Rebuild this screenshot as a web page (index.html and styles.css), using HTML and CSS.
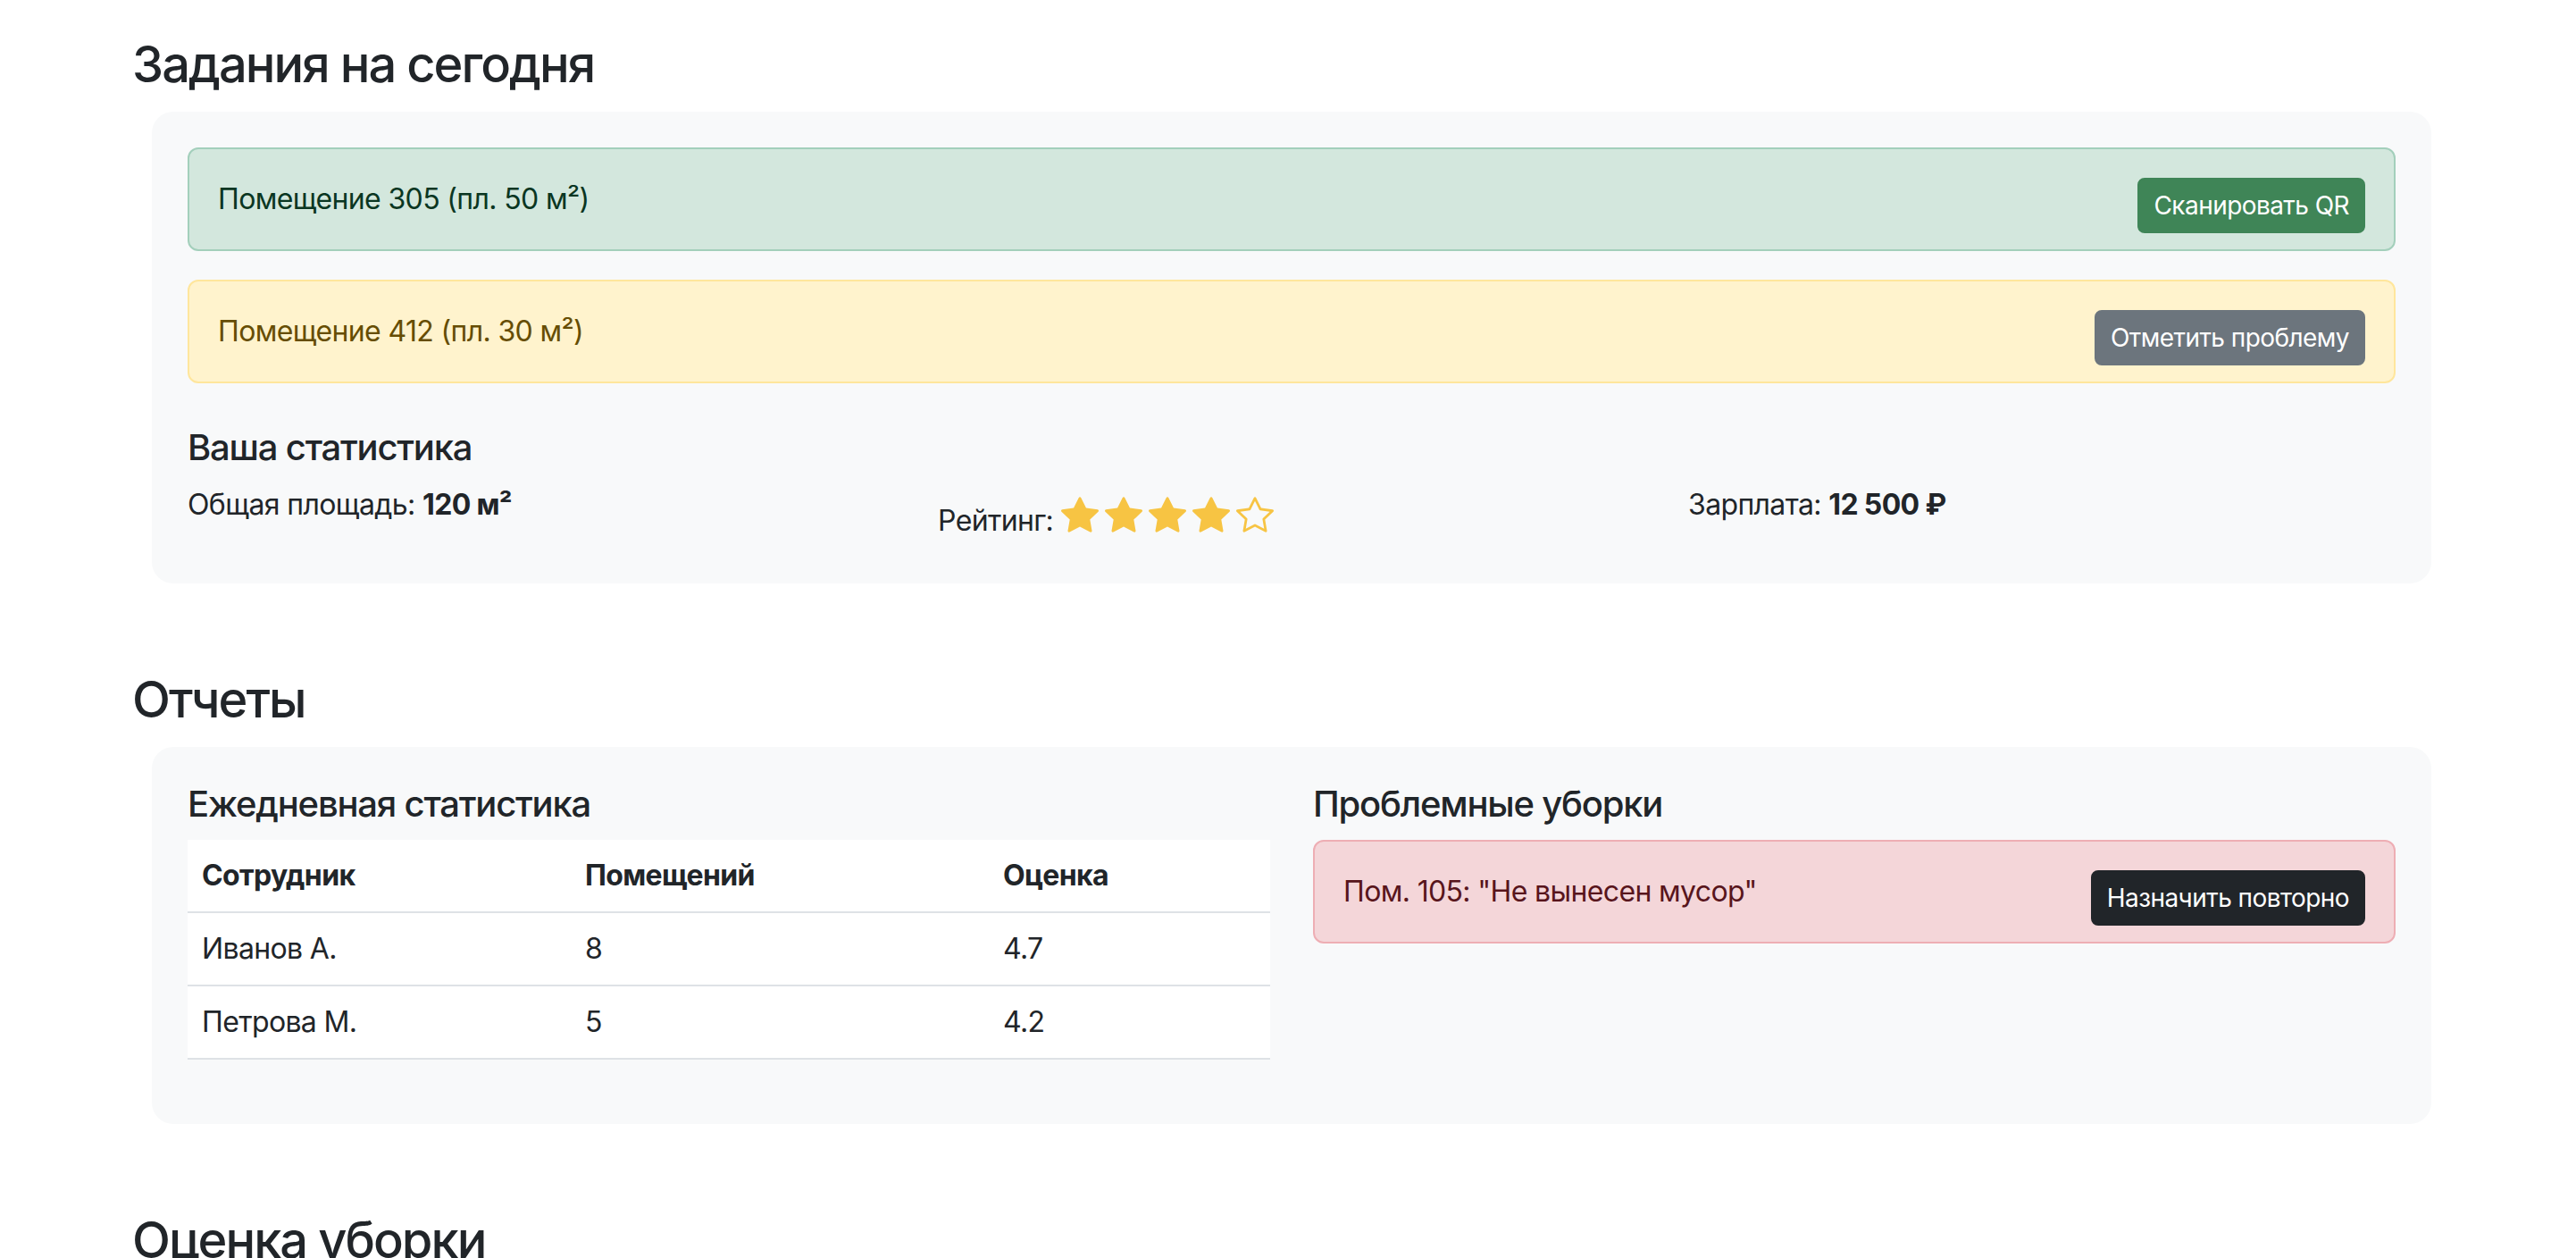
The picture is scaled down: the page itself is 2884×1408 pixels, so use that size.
FILE: index.html
```html
<!DOCTYPE html>
<html lang="ru">
<head>
<meta charset="utf-8">
<title>Уборка</title>
<link rel="stylesheet" href="styles.css">
</head>
<body>
<div class="container">
  <section class="section">
    <h3 class="title">Задания на сегодня</h3>
    <div class="panel">
      <div class="alert alert-success">
        <button class="btn btn-success">Сканировать QR</button>
        Помещение 305 (пл. 50 м²)
      </div>
      <div class="alert alert-warning">
        <button class="btn btn-secondary">Отметить проблему</button>
        Помещение 412 (пл. 30 м²)
      </div>
      <h5 class="subtitle stats-title">Ваша статистика</h5>
      <div class="row3">
        <p class="stat">Общая площадь: <strong>120 м²</strong></p>
        <p class="stat">Рейтинг: <span class="stars"><svg class="star" viewBox="0 0 16 16"><path d="M3.612 15.443c-.386.198-.824-.149-.746-.592l.83-4.73L.173 6.765c-.329-.314-.158-.888.283-.95l4.898-.696L7.538.792c.197-.39.73-.39.927 0l2.184 4.327 4.898.696c.441.062.612.636.282.95l-3.522 3.356.83 4.73c.078.443-.36.79-.746.592L8 13.187l-4.389 2.256z"/></svg><svg class="star" viewBox="0 0 16 16"><path d="M3.612 15.443c-.386.198-.824-.149-.746-.592l.83-4.73L.173 6.765c-.329-.314-.158-.888.283-.95l4.898-.696L7.538.792c.197-.39.73-.39.927 0l2.184 4.327 4.898.696c.441.062.612.636.282.95l-3.522 3.356.83 4.73c.078.443-.36.79-.746.592L8 13.187l-4.389 2.256z"/></svg><svg class="star" viewBox="0 0 16 16"><path d="M3.612 15.443c-.386.198-.824-.149-.746-.592l.83-4.73L.173 6.765c-.329-.314-.158-.888.283-.95l4.898-.696L7.538.792c.197-.39.73-.39.927 0l2.184 4.327 4.898.696c.441.062.612.636.282.95l-3.522 3.356.83 4.73c.078.443-.36.79-.746.592L8 13.187l-4.389 2.256z"/></svg><svg class="star" viewBox="0 0 16 16"><path d="M3.612 15.443c-.386.198-.824-.149-.746-.592l.83-4.73L.173 6.765c-.329-.314-.158-.888.283-.95l4.898-.696L7.538.792c.197-.39.73-.39.927 0l2.184 4.327 4.898.696c.441.062.612.636.282.95l-3.522 3.356.83 4.73c.078.443-.36.79-.746.592L8 13.187l-4.389 2.256z"/></svg><svg class="star" viewBox="0 0 16 16"><path d="M2.866 14.85c-.078.444.36.791.746.593l4.39-2.256 4.389 2.256c.386.198.824-.149.746-.592l-.83-4.73 3.522-3.356c.33-.314.16-.888-.282-.95l-4.898-.696L8.465.792a.513.513 0 0 0-.927 0L5.354 5.12l-4.898.696c-.441.062-.612.636-.283.95l3.523 3.356-.83 4.73zm4.905-2.767-3.686 1.894.694-3.957a.565.565 0 0 0-.163-.505L1.71 6.745l4.052-.576a.525.525 0 0 0 .393-.288L8 2.223l1.847 3.658a.525.525 0 0 0 .393.288l4.052.575-2.906 2.77a.565.565 0 0 0-.163.506l.694 3.957-3.686-1.894a.503.503 0 0 0-.461 0z"/></svg></span></p>
        <p class="stat">Зарплата: <strong>12 500 ₽</strong></p>
      </div>
    </div>
  </section>

  <section class="section">
    <h3 class="title">Отчеты</h3>
    <div class="panel">
      <div class="row2">
        <div class="col">
          <h5 class="subtitle">Ежедневная статистика</h5>
          <table class="table">
            <colgroup><col class="w1"><col class="w2"><col class="w3"></colgroup>
            <thead>
              <tr><th>Сотрудник</th><th>Помещений</th><th>Оценка</th></tr>
            </thead>
            <tbody>
              <tr><td>Иванов А.</td><td>8</td><td>4.7</td></tr>
              <tr><td>Петрова М.</td><td>5</td><td>4.2</td></tr>
            </tbody>
          </table>
        </div>
        <div class="col">
          <h5 class="subtitle">Проблемные уборки</h5>
          <div class="alert alert-danger">
            <button class="btn btn-dark">Назначить повторно</button>
            Пом. 105: "Не вынесен мусор"
          </div>
        </div>
      </div>
    </div>
  </section>

  <section class="section">
    <h3 class="title">Оценка уборки</h3>
    <div class="panel">
      <p class="stat">Выберите помещение для оценки</p>
    </div>
  </section>
</div>
</body>
</html>
```

FILE: styles.css
```css
* { box-sizing: border-box; }

body {
  margin: 0;
  background: #ffffff;
  color: #212529;
  font-family: Inter, "Noto Sans", "Liberation Sans", sans-serif;
  font-size: 32px;
  line-height: 1.5;
  letter-spacing: -0.02em;
}

.container {
  width: 2592px;
  margin: 0 auto;
  padding-top: 39px;
}

.section {
  margin-bottom: 97px;
}

.title {
  font-size: 56px;
  font-weight: 500;
  line-height: 1.2;
  letter-spacing: -0.035em;
  margin: 0 0 19px 2px;
}

.panel {
  background: #f8f9fa;
  border-radius: 24px;
  padding: 40px;
  margin: 0 16px 0 24px;
}

.subtitle {
  font-size: 40px;
  font-weight: 500;
  line-height: 1.2;
  letter-spacing: -0.03em;
  margin: 0 0 16px;
}

.stats-title {
  margin-top: 48px;
}

.alert {
  border: 2px solid transparent;
  border-radius: 12px;
  padding: 32px;
  margin-bottom: 32px;
}

.alert-success {
  background: #d3e7dd;
  border-color: #a3cfbb;
  color: #0a3622;
}

.alert-warning {
  background: #fff3cd;
  border-color: #ffe69c;
  color: #664d03;
}

.alert-danger {
  background: #f4d6d9;
  border-color: #eeaeb4;
  color: #58151c;
}

.btn {
  float: right;
  font-family: inherit;
  font-size: 28px;
  line-height: 42px;
  letter-spacing: -0.02em;
  padding: 8px 16px;
  border: 2px solid transparent;
  border-radius: 8px;
  color: #ffffff;
  cursor: pointer;
}

.btn-success {
  background: #3f8557;
  border-color: #3f8557;
}

.btn-secondary {
  background: #6c757d;
  border-color: #6c757d;
}

.btn-dark {
  background: #212529;
  border-color: #212529;
}

.row3 {
  display: grid;
  grid-template-columns: repeat(3, 1fr);
  column-gap: 48px;
  align-items: start;
}

.row2 {
  display: grid;
  grid-template-columns: repeat(2, 1fr);
  column-gap: 48px;
  align-items: start;
}

.stat {
  margin: 0;
}

.stat strong {
  font-weight: 700;
}

.stars {
  font-size: 48px;
  line-height: 72px;
}

.star {
  width: 42px;
  height: 42px;
  margin-right: 7px;
  vertical-align: -3px;
  fill: #f7c443;
}

.table {
  width: 100%;
  border-collapse: collapse;
  table-layout: fixed;
  background: #ffffff;
  margin-bottom: 32px;
}

.w1 { width: 429px; }
.w2 { width: 468px; }
.w3 { width: 315px; }

.table th,
.table td {
  text-align: left;
  padding: 16px;
  border-bottom: 2px solid #dee2e6;
  line-height: 48px;
}

.table th {
  font-weight: 700;
}
```
